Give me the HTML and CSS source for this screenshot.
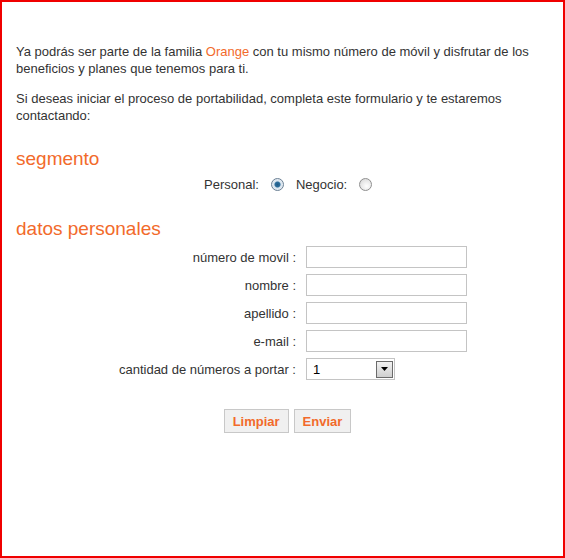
FILE: index.html
```html
<!DOCTYPE html>
<html lang="es">
<head>
<meta charset="utf-8">
<title>Portabilidad</title>
<link rel="stylesheet" href="styles.css">
</head>
<body>
<div class="frame">
  <p class="intro">Ya podrás ser parte de la familia <span class="brand">Orange</span> con tu mismo número de móvil y disfrutar de los beneficios y planes que tenemos para ti.</p>
  <p class="intro second">Si deseas iniciar el proceso de portabilidad, completa este formulario y te estaremos contactando:</p>

  <h2 class="section-title first">segmento</h2>
  <div class="segment-row">
    <span class="seg-label">Personal:</span>
    <input class="radio" type="radio" name="seg" checked>
    <span class="seg-label">Negocio:</span>
    <input class="radio" type="radio" name="seg">
  </div>

  <h2 class="section-title second-title">datos personales</h2>
  <div class="form-grid">
    <label class="field-label">número de movil :</label>
    <input class="text-input" type="text">
    <label class="field-label">nombre :</label>
    <input class="text-input" type="text">
    <label class="field-label">apellido :</label>
    <input class="text-input" type="text">
    <label class="field-label">e-mail :</label>
    <input class="text-input" type="text">
    <label class="field-label">cantidad de números a portar :</label>
    <div class="fake-select">
      <span class="select-value">1</span>
      <span class="select-arrow">
        <svg width="7" height="4" viewBox="0 0 7 4"><polygon points="0,0 7,0 3.5,4" fill="#000"/></svg>
      </span>
    </div>
  </div>

  <div class="actions">
    <button class="btn" type="button">Limpiar</button>
    <button class="btn" type="button">Enviar</button>
  </div>
</div>
</body>
</html>
```

FILE: styles.css
```css
html, body {
  margin: 0;
  padding: 0;
  background: #ffffff;
}

.frame {
  box-sizing: border-box;
  width: 565px;
  height: 558px;
  border: 2px solid #f00000;
  padding: 41px 5px 0 14px;
  font-family: "Liberation Sans", Arial, sans-serif;
  font-size: 13px;
  line-height: 17px;
  color: #333333;
}

.intro {
  margin: 0;
  padding-right: 16px;
}

.intro.second {
  margin-top: 13px;
}

.brand {
  color: #f26a2b;
}

.section-title {
  margin: 0;
  font-weight: normal;
  font-size: 19px;
  line-height: 22px;
  color: #f26a2b;
}

.section-title.first {
  margin-top: 24px;
}

.section-title.second-title {
  margin-top: 26px;
}

.segment-row {
  display: flex;
  align-items: center;
  height: 16px;
  margin-top: 6px;
  padding-left: 188px;
}

.seg-label {
  margin-right: 12px;
}

.seg-label + .radio {
  margin-right: 12px;
}

.radio {
  appearance: none;
  -webkit-appearance: none;
  box-sizing: border-box;
  width: 13px;
  height: 13px;
  margin: 0;
  border: 1px solid #8f8f8f;
  border-radius: 50%;
  background: radial-gradient(circle at 60% 65%, #ffffff 0, #e8e8e8 55%, #cfcfcf 100%);
}

.radio:checked {
  border-color: #6a7f94;
  background: radial-gradient(circle, #1f5a86 0, #2e6e9c 2.5px, #d7e3ee 3.5px, #f4f6f8 100%);
}

.form-grid {
  display: grid;
  grid-template-columns: 281px 161px;
  column-gap: 9px;
  row-gap: 6px;
  margin-top: 6px;
  align-items: center;
}

.field-label {
  text-align: right;
  padding-right: 1px;
}

.text-input {
  box-sizing: border-box;
  width: 161px;
  height: 22px;
  margin: 0;
  border: 1px solid #c4c4c4;
  background: #ffffff;
  font-family: inherit;
  font-size: 13px;
}

.fake-select {
  box-sizing: border-box;
  width: 89px;
  height: 22px;
  border: 1px solid #c4c4c4;
  display: flex;
  align-items: center;
  justify-content: space-between;
  padding: 0 1px 0 6px;
  background: #ffffff;
  color: #000000;
}

.select-value {
  font-size: 13px;
}

.select-arrow {
  box-sizing: border-box;
  width: 17px;
  height: 17px;
  border: 1px solid #6b6b6b;
  background: linear-gradient(#f2f2f2, #cfcfcf);
  display: flex;
  align-items: center;
  justify-content: center;
}

.actions {
  display: flex;
  justify-content: center;
  gap: 5px;
  margin-top: 29px;
  padding-left: 1px;
}

.btn {
  box-sizing: border-box;
  height: 24px;
  padding: 0 8px;
  margin: 0;
  border: 1px solid #c8c8c8;
  background: #f0f0f0;
  color: #f26a2b;
  font-family: "Liberation Sans", Arial, sans-serif;
  font-weight: bold;
  font-size: 13px;
}
```
